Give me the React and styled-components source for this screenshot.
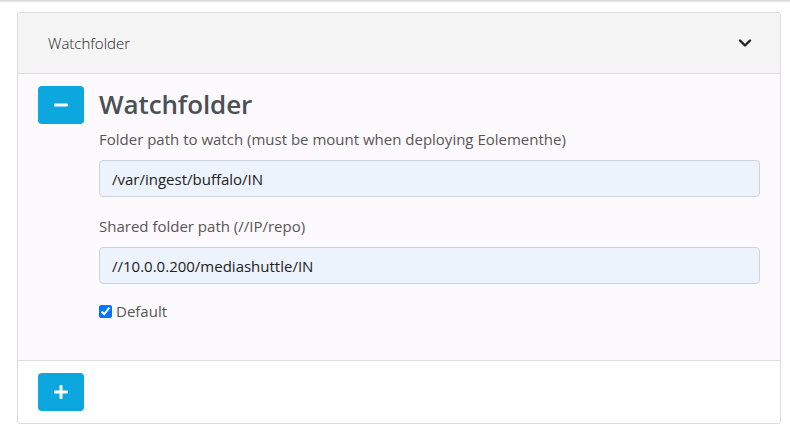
import React from "react";
import styled, { createGlobalStyle } from "styled-components";

const Global = createGlobalStyle`
  html, body { margin: 0; padding: 0; background: #fff; }
  body { font-family: "Open Sans", "Noto Sans", sans-serif; }
`;

const Page = styled.div`
  position: relative;
  padding: 12px 9px 7px 17px;
`;

const TopShadow = styled.div`
  position: absolute;
  left: 0; right: 0; top: 0;
  height: 3px;
  background: linear-gradient(#cfcfcf, #f4f4f4 70%, #fff);
`;

const Card = styled.div`
  border: 1px solid #dcdcdc;
  border-radius: 3px;
  background: #fff;
  overflow: hidden;
`;

const Header = styled.div`
  height: 60px;
  background: #f5f5f5;
  border-bottom: 1px solid #dcdcdc;
  display: flex;
  align-items: center;
  justify-content: space-between;
  padding: 0 28px 0 30px;
  font-size: 15px;
  font-weight: 300;
  color: #222;
`;

const Body = styled.div`
  background: #fdfafd;
  border-bottom: 1px solid #dedede;
  padding: 12px 20px 39px 20px;
  display: flex;
  gap: 15px;
`;

const SquareButton = styled.button`
  width: 46px;
  height: 38px;
  flex: none;
  border: none;
  border-radius: 4px;
  background: #0ba7de;
  color: #fff;
  display: flex;
  align-items: center;
  justify-content: center;
  padding: 0;
`;

const Content = styled.div`
  flex: 1;
  display: flex;
  flex-direction: column;
`;

const Title = styled.h2`
  margin: 0;
  font-size: 26px;
  font-weight: 600;
  color: #495057;
  line-height: 36px;
  letter-spacing: -0.1px;
`;

const Label = styled.div`
  font-size: 15px;
  color: #555;
  line-height: 22px;
  margin-top: ${(p) => p.$top}px;
`;

const Input = styled.input`
  box-sizing: border-box;
  height: 37px;
  margin-top: 10px;
  border: 1px solid #ccd4e0;
  border-radius: 4px;
  background: #edf3fd;
  padding: 0 12px;
  font-family: inherit;
  font-size: 15px;
  color: #222;
  outline: none;
`;

const CheckRow = styled.label`
  display: flex;
  align-items: center;
  gap: 4px;
  margin-top: 17px;
  font-size: 15px;
  color: #555;
  line-height: 20px;
`;

const Check = styled.input`
  margin: 0;
  width: 13px;
  height: 13px;
  accent-color: #0075ff;
`;

const Footer = styled.div`
  padding: 12px 20px 12px 20px;
`;

export default function App() {
  return (
    <>
      <Global />
      <TopShadow />
      <Page>
        <Card>
          <Header>
            <span>Watchfolder</span>
            <svg width="14" height="10" viewBox="0 0 14 10">
              <path d="M2 2.5 L7 7.5 L12 2.5" fill="none" stroke="#222" strokeWidth="2.4" strokeLinecap="round" strokeLinejoin="round" />
            </svg>
          </Header>
          <Body>
            <SquareButton aria-label="remove">
              <svg width="14" height="4" viewBox="0 0 14 4">
                <rect x="0" y="0.5" width="14" height="3" rx="1" fill="#fff" />
              </svg>
            </SquareButton>
            <Content>
              <Title>Watchfolder</Title>
              <Label $top={6}>Folder path to watch (must be mount when deploying Eolementhe)</Label>
              <Input defaultValue="/var/ingest/buffalo/IN" />
              <Label $top={18}>Shared folder path (//IP/repo)</Label>
              <Input defaultValue="//10.0.0.200/mediashuttle/IN" />
              <CheckRow>
                <Check type="checkbox" defaultChecked />
                Default
              </CheckRow>
            </Content>
          </Body>
          <Footer>
            <SquareButton aria-label="add">
              <svg width="14" height="14" viewBox="0 0 14 14">
                <rect x="5.5" y="0" width="3" height="14" rx="1" fill="#fff" />
                <rect x="0" y="5.5" width="14" height="3" rx="1" fill="#fff" />
              </svg>
            </SquareButton>
          </Footer>
        </Card>
      </Page>
    </>
  );
}
